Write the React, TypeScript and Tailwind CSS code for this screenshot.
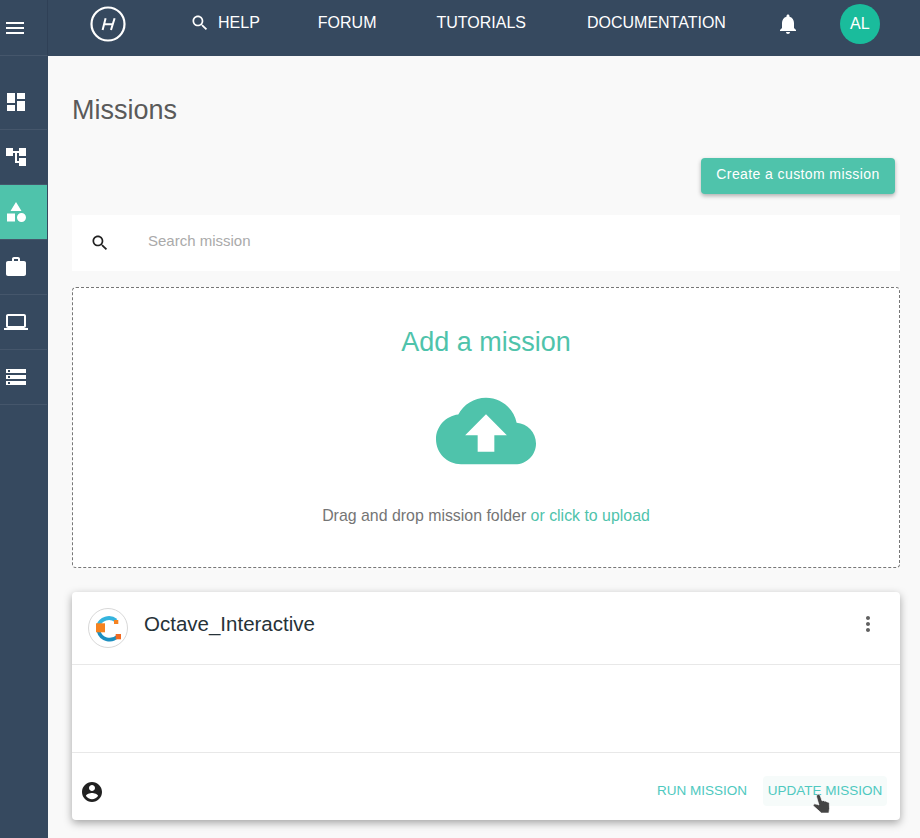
import React from 'react';

const paths = {
  menu: 'M3 18h18v-2H3v2zm0-5h18v-2H3v2zm0-7v2h18V6H3z',
  search:
    'M15.5 14h-.79l-.28-.27C15.41 12.59 16 11.11 16 9.5 16 5.91 13.09 3 9.5 3S3 5.91 3 9.5 5.91 16 9.5 16c1.61 0 3.09-.59 4.23-1.57l.27.28v.79l5 4.99L20.49 19l-4.99-5zm-6 0C7.01 14 5 11.99 5 9.5S7.01 5 9.5 5 14 7.01 14 9.5 11.99 14 9.5 14z',
  dashboard: 'M3 13h8V3H3v10zm0 8h8v-6H3v6zm10 0h8V11h-8v10zm0-18v6h8V3h-8z',
  tree: 'M22 11V3h-7v3H9V3H2v8h7V8h2v10h4v3h7v-8h-7v3h-2V8h2v3z',
  category: 'M12 2l-5.5 9h11zM17.5 13a4.5 4.5 0 1 0 0 9 4.5 4.5 0 0 0 0-9zM3 13.5h8v8H3z',
  work: 'M20 6h-4V4c0-1.11-.89-2-2-2h-4c-1.11 0-2 .89-2 2v2H4c-1.11 0-1.99.89-1.99 2L2 19c0 1.11.89 2 2 2h16c1.11 0 2-.89 2-2V8c0-1.11-.89-2-2-2zm-6 0h-4V4h4v2z',
  laptop:
    'M20 18c1.1 0 1.99-.9 1.99-2L22 6c0-1.1-.9-2-2-2H4c-1.1 0-2 .9-2 2v10c0 1.1.9 2 2 2H0v2h24v-2h-4zM4 6h16v10H4V6z',
  storage: 'M2 20h20v-4H2v4zm2-3h2v2H4v-2zM2 4v4h20V4H2zm4 3H4V5h2v2zm-4 7h20v-4H2v4zm2-3h2v2H4v-2z',
  bell: 'M12 22c1.1 0 2-.9 2-2h-4c0 1.1.89 2 2 2zm6-6v-5c0-3.07-1.64-5.64-4.5-6.32V4c0-.83-.67-1.5-1.5-1.5s-1.5.67-1.5 1.5v.68C7.63 5.36 6 7.92 6 11v5l-2 2v1h16v-1l-2-2z',
  cloud:
    'M19.35 10.04C18.67 6.59 15.64 4 12 4 9.11 4 6.6 5.64 5.35 8.04 2.34 8.36 0 10.91 0 14c0 3.31 2.69 6 6 6h13c2.76 0 5-2.24 5-5 0-2.64-2.05-4.78-4.65-4.96zM14 13v4h-4v-4H7l5-5 5 5h-3z',
  account:
    'M12 2C6.48 2 2 6.48 2 12s4.48 10 10 10 10-4.48 10-10S17.52 2 12 2zm0 3c1.66 0 3 1.34 3 3s-1.34 3-3 3-3-1.34-3-3 1.34-3 3-3zm0 14.2c-2.5 0-4.71-1.28-6-3.22.03-1.99 4-3.08 6-3.08 1.99 0 5.97 1.09 6 3.08-1.29 1.94-3.5 3.22-6 3.22z',
  more: 'M12 8c1.1 0 2-.9 2-2s-.9-2-2-2-2 .9-2 2 .9 2 2 2zm0 2c-1.1 0-2 .9-2 2s.9 2 2 2 2-.9 2-2-.9-2-2-2zm0 6c-1.1 0-2 .9-2 2s.9 2 2 2 2-.9 2-2-.9-2-2-2z',
};

function Icon({ d, className }: { d: string; className?: string }) {
  return (
    <svg viewBox="0 0 24 24" fill="currentColor" className={className}>
      <path d={d} />
    </svg>
  );
}

const sideItems = [
  { icon: paths.dashboard },
  { icon: paths.tree },
  { icon: paths.category, active: true },
  { icon: paths.work },
  { icon: paths.laptop },
  { icon: paths.storage },
];

function Sidebar() {
  return (
    <aside className="w-12 shrink-0 h-full bg-[#36495f] text-white">
      <div className="h-14 pl-[3px] flex items-center border-b border-[#45566b] border-r border-r-[#2f4056]">
        <Icon d={paths.menu} className="w-6 h-6" />
      </div>
      <div className="pt-[19px]">
        {sideItems.map((item, i) => (
          <div
            key={i}
            className={`h-[55px] w-[47px] pl-1 flex items-center border-b border-[#45566b] ${
              item.active ? 'bg-[#4fc3ab]' : ''
            }`}
          >
            <Icon d={item.icon} className="w-6 h-6" />
          </div>
        ))}
      </div>
    </aside>
  );
}

function Header() {
  return (
    <header className="h-14 bg-[#36495f] text-white flex items-start text-base shrink-0">
      <svg viewBox="0 0 36 36" className="w-9 h-9 ml-[42px] mt-[6px]" fill="none" stroke="currentColor">
        <circle cx="18" cy="18" r="16.5" strokeWidth="2.2" />
        <path d="M15.6 12.3 12.6 24M24.6 12.3 21 24M14 18.2h9" strokeWidth="2" />
      </svg>
      <div className="ml-[64px] mt-3 flex items-center h-[22px]">
        <Icon d={paths.search} className="w-5 h-5" />
        <span className="ml-2">HELP</span>
        <span className="ml-[58px]">FORUM</span>
        <span className="ml-[60px]">TUTORIALS</span>
        <span className="ml-[61px]">DOCUMENTATION</span>
      </div>
      <Icon d={paths.bell} className="w-6 h-6 ml-[50px] mt-3" />
      <div className="w-10 h-10 rounded-full bg-[#1abc9c] ml-10 mt-1 flex items-center justify-center">AL</div>
    </header>
  );
}

function OctaveLogo() {
  return (
    <div className="w-10 h-10 rounded-full border border-[#d8d8d8] bg-white">
      <svg viewBox="1 1 38 38" className="w-full h-full">
        <path d="M10 18A11.5 11.5 0 0 1 28 12.5" fill="none" stroke="#35b4de" strokeWidth="4" />
        <path d="M10.5 23A11.5 11.5 0 0 0 29.5 28.5" fill="none" stroke="#1c8fc0" strokeWidth="3.6" />
        <rect x="8" y="15.3" width="9" height="9" fill="#f58220" />
        <rect x="26" y="12" width="4.3" height="4" fill="#f58220" />
        <rect x="27.7" y="26" width="5.3" height="5.3" fill="#f26a21" />
      </svg>
    </div>
  );
}

function MissionCard() {
  return (
    <section className="mt-6 h-[228px] bg-white rounded shadow-[0_3px_8px_rgba(0,0,0,0.35)] flex flex-col">
      <div className="h-[73px] shrink-0 border-b border-[#e8e8e8] pl-4 pr-5 flex items-center">
        <OctaveLogo />
        <span className="ml-4 text-[20.5px] text-[#263238] -mt-[8px]">Octave_Interactive</span>
        <Icon d={paths.more} className="w-6 h-6 ml-auto text-[#616161] -mt-2" />
      </div>
      <div className="flex-1 border-b border-[#e8e8e8]" />
      <div className="h-[67px] shrink-0 pl-2 pr-[13px] flex items-center text-[13.5px] text-[#4fc9c0]">
        <Icon d={paths.account} className="w-6 h-6 text-[#212121] mt-[11px]" />
        <span className="ml-auto mt-[9px]">RUN MISSION</span>
        <div className="relative ml-4 mt-[9px] h-[30px] w-[124px] rounded bg-[#f6fbfa] flex items-center justify-center">
          UPDATE MISSION
          <svg viewBox="0 0 24 26" className="absolute left-[46px] top-[14px] w-6 h-[26px]">
            <path
              d="M8.5 4.6c1.2-.7 2.4 0 2.8 1.2l1.7 5 2-.4.4.8 1.7-.2.7 1 1.6.1.9 1.2.2 5.2-.6 4.6h-7.5L4 15.6l1.4-1.8 3.2.6 1.3.6L7.6 7c-.2-1 0-1.9.9-2.4z"
              fill="#444"
              stroke="#fff"
              strokeWidth="0.7"
            />
          </svg>
        </div>
      </div>
    </section>
  );
}

export default function App() {
  return (
    <div className="w-[920px] h-[838px] overflow-hidden flex bg-[#f9f9f9] font-['Liberation_Sans',Arial,sans-serif]">
      <Sidebar />
      <div className="flex-1 flex flex-col min-w-0">
        <Header />
        <main className="pl-6 pr-5">
          <h1 className="text-[27px] leading-9 text-[#5a5a5a] mt-9">Missions</h1>
          <div className="flex justify-end mt-[30px] pr-[5px]">
            <button className="h-9 w-[194px] pb-1 rounded bg-[#4fc3ab] text-white text-sm tracking-[0.4px] shadow-[0_2px_4px_rgba(0,0,0,0.3)]">
              Create a custom mission
            </button>
          </div>
          <div className="mt-[21px] h-14 bg-white flex items-center pl-[18px] text-[15px] text-[#aaa]">
            <Icon d={paths.search} className="w-5 h-5 text-[#212121]" />
            <span className="ml-[38px] -mt-1">Search mission</span>
          </div>
          <div className="mt-4 h-[281px] bg-white border border-dashed border-[#777] rounded flex flex-col items-center">
            <h2 className="mt-[36px] text-[27px] leading-9 text-[#4fc3ab]">Add a mission</h2>
            <Icon d={paths.cloud} className="w-[100px] h-[100px] text-[#4fc3ab] mt-[21px]" />
            <p className="mt-[23px] text-[15.9px] leading-6 text-[#757575]">
              Drag and drop mission folder <span className="text-[#4fc3ab]">or click to upload</span>
            </p>
          </div>
          <MissionCard />
        </main>
      </div>
    </div>
  );
}
